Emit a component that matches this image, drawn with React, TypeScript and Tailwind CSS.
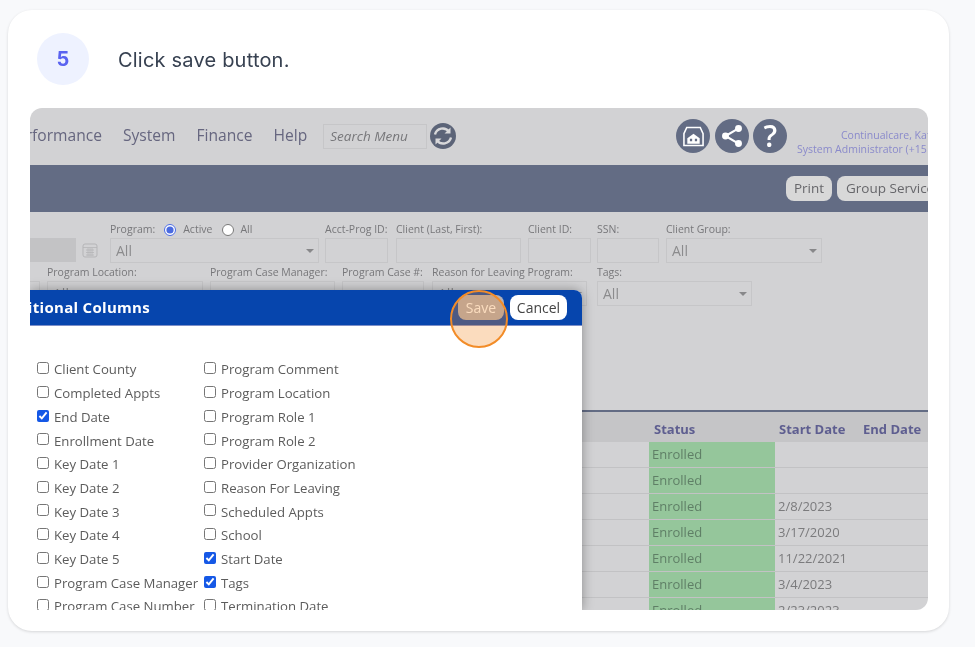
import React from 'react';

const leftColumn: [string, boolean][] = [
  ['Client County', false],
  ['Completed Appts', false],
  ['End Date', true],
  ['Enrollment Date', false],
  ['Key Date 1', false],
  ['Key Date 2', false],
  ['Key Date 3', false],
  ['Key Date 4', false],
  ['Key Date 5', false],
  ['Program Case Manager', false],
  ['Program Case Number', false],
];

const rightColumn: [string, boolean][] = [
  ['Program Comment', false],
  ['Program Location', false],
  ['Program Role 1', false],
  ['Program Role 2', false],
  ['Provider Organization', false],
  ['Reason For Leaving', false],
  ['Scheduled Appts', false],
  ['School', false],
  ['Start Date', true],
  ['Tags', true],
  ['Termination Date', false],
];

const startDates = ['', '', '2/8/2023', '3/17/2020', '11/22/2021', '3/4/2023', '2/23/2023'];

const Field = ({ label, className, select, value }: { label: string; className: string; select?: boolean; value?: string }) => (
  <div className={`shrink-0 ${className}`}>
    <div className="h-[17px] text-[10.5px] leading-[17px] text-[#77777a] whitespace-nowrap">{label}</div>
    <div className="h-[25px] border border-[#c6c6c8] flex items-center justify-between pl-[5px] pr-[4px] text-[14px] text-[#8b8b8d]">
      <span>{value}</span>
      {select && <span className="border-x-[4px] border-x-transparent border-t-[4px] border-t-[#88888a]" />}
    </div>
  </div>
);

const ColumnOption = ({ label, checked }: { label: string; checked: boolean }) => (
  <label className="flex items-center h-[23.7px] gap-[5px] whitespace-nowrap text-[13.2px] text-[#5c5c5c]">
    <input type="checkbox" checked={checked} readOnly className="w-[12px] h-[12px] m-0 accent-[#1558e6] -translate-y-[2px]" />
    {label}
  </label>
);

const CircleIcon = ({ children }: { children: React.ReactNode }) => (
  <span className="w-[34px] h-[34px] rounded-full bg-[#636c84] flex items-center justify-center text-white">{children}</span>
);

export default function App() {
  return (
    <div className="w-[975px] h-[647px] bg-[#f8f9fb] pt-[10px] pl-[8px] overflow-hidden font-['Inter',sans-serif] blur-[0.35px]">
      <div className="w-[941px] h-[621px] bg-white rounded-[24px] shadow-[0_1px_3px_rgba(0,0,0,0.14)] pt-[23px] pl-[22px]">
        {/* STEP HEADER */}
        <div className="flex items-center gap-[29px] pl-[7px]">
          <div className="w-[52px] h-[52px] rounded-full bg-[#eef2ff] flex items-center justify-center text-[20px] font-bold text-[#5a63f0]">5</div>
          <p className="text-[20px] text-[#374151] tracking-[0.2px] pt-[2px]">Click save button.</p>
        </div>

        {/* SCREENSHOT */}
        <div className="relative mt-[23px] w-[898px] h-[502px] rounded-tl-[12px] rounded-r-[12px] overflow-hidden bg-[#d2d2d4] font-['Open_Sans',sans-serif]">
          {/* top nav */}
          <div className="h-[57px] flex items-center pb-[1px] text-[15.6px] text-[#66667f] relative">
            <div className="w-[72px] overflow-hidden flex justify-end shrink-0"><span>Performance</span></div>
            <span className="ml-[21px]">System</span>
            <span className="ml-[21px]">Finance</span>
            <span className="ml-[21px]">Help</span>
            <div className="ml-[16px] w-[104px] h-[25px] border border-[#c6c6c8] flex items-center pl-[6px] text-[13.5px] italic text-[#77777a]">Search Menu</div>
            <svg viewBox="0 0 26 26" className="ml-[3px] w-[26px] h-[26px]">
              <circle cx="13" cy="13" r="13" fill="#5c6478" />
              <path d="M5 11.500a8 8 0 0 1 14-3M21 14.500a8 8 0 0 1-14 3" stroke="#d8d8da" strokeWidth="2.400" fill="none" />
              <path d="M20.500 4.500v6h-6zM5.500 21.500v-6h6z" fill="#d8d8da" />
            </svg>
            <div className="ml-[220px] flex gap-[4.5px]">
              <CircleIcon>
                <svg viewBox="0 0 24 24" className="w-[27px] h-[27px]" fill="none" stroke="currentColor" strokeWidth="1.400">
                  <path d="M3.500 9.500 6 4h12l2.500 5.500V20h-17z" />
                  <path d="M6.500 18.500v-5L12 9.500l5.500 4v5z" fill="currentColor" stroke="none" />
                  <path d="M8.800 14h2v2.200h-2zM13.200 14h2v2.200h-2z" fill="#636c84" stroke="none" />
                </svg>
              </CircleIcon>
              <CircleIcon>
                <svg viewBox="0 0 24 24" className="w-[26px] h-[26px]" fill="currentColor" stroke="currentColor" strokeWidth="2">
                  <circle cx="18" cy="5" r="2.200" />
                  <circle cx="6" cy="12" r="2.200" />
                  <circle cx="18" cy="19" r="2.200" />
                  <path d="M18 5 6 12l12 7" fill="none" />
                </svg>
              </CircleIcon>
              <CircleIcon><span className="text-[30px] font-semibold leading-none">?</span></CircleIcon>
            </div>
            <div className="absolute right-0 top-[20px] w-[131px] overflow-hidden text-[10.5px] leading-[14px] text-[#8a8acb] whitespace-nowrap">
              <div className="pl-[44px]">Continualcare, Kate</div>
              <div>System Administrator (+15</div>
            </div>
          </div>

          {/* slate toolbar */}
          <div className="h-[47px] bg-[#636c84] flex items-center pl-[756px] gap-[5px] text-[13.5px] text-[#66666a] whitespace-nowrap">
            <span className="h-[25px] w-[46px] shrink-0 rounded-[8px] bg-[#d8d8d8] flex items-center justify-center">Print</span>
            <span className="h-[25px] rounded-[8px] bg-[#d8d8d8] flex items-center pl-[9px] pr-[12px]">Group Services</span>
          </div>

          {/* filters */}
          <div className="h-[198px] pt-[9px]">
            <div className="flex h-[42px]">
              <div className="w-[46px] h-[24px] mt-[17px] bg-[#c3c3c5] shrink-0" />
              <svg viewBox="0 0 16 16" className="ml-[6px] mt-[21px] w-[16px] h-[16px] shrink-0" fill="none" stroke="#b5b5b7">
                <rect x="1" y="2" width="14" height="13" rx="2" />
                <path d="M1 5.500h14M4 8h8M4 10.500h8M4 13h8M6 6v8M8 6v8M10 6v8" strokeWidth="0.800" />
              </svg>
              <div className="ml-[12px] w-[209px] shrink-0">
                <div className="h-[17px] flex items-center text-[10.5px] text-[#77777a] whitespace-nowrap">
                  Program:
                  <input type="radio" checked readOnly className="ml-[9px] m-0 w-[12px] h-[12px] accent-[#4a6ae0]" />
                  <span className="ml-[7px]">Active</span>
                  <input type="radio" checked={false} readOnly className="ml-[10px] m-0 w-[12px] h-[12px]" />
                  <span className="ml-[6px]">All</span>
                </div>
                <div className="h-[25px] border border-[#c6c6c8] flex items-center justify-between pl-[5px] pr-[4px] text-[14px] text-[#8b8b8d]">
                  <span>All</span>
                  <span className="border-x-[4px] border-x-transparent border-t-[4px] border-t-[#88888a]" />
                </div>
              </div>
              <Field label="Acct-Prog ID:" className="ml-[6px] w-[63px]" />
              <Field label="Client (Last, First):" className="ml-[8px] w-[125px]" />
              <Field label="Client ID:" className="ml-[7px] w-[63px]" />
              <Field label="SSN:" className="ml-[6px] w-[62px]" />
              <Field label="Client Group:" className="ml-[7px] w-[156px]" select value="All" />
            </div>
            <div className="flex h-[42px] mt-[1px]">
              <div className="w-[10px] h-[24px] mt-[17px] border border-[#c6c6c8] border-l-0 shrink-0" />
              <Field label="Program Location:" className="ml-[7px] w-[156px]" select value="All" />
              <Field label="Program Case Manager:" className="ml-[7px] w-[125px]" />
              <Field label="Program Case #:" className="ml-[7px] w-[82px]" />
              <Field label="Reason for Leaving Program:" className="ml-[8px] w-[155px]" select value="All" />
              <Field label="Tags:" className="ml-[10px] w-[155px]" select value="All" />
            </div>
          </div>

          {/* table */}
          <div className="border-t-[2px] border-[#636c84]">
            <div className="h-[30px] bg-[#c5c5c7] flex items-center text-[13px] font-bold text-[#5e5e90] pt-[6px]">
              <span className="ml-[624px] w-[125px]">Status</span>
              <span className="w-[84px]">Start Date</span>
              <span>End Date</span>
            </div>
            {startDates.map((date, i) => (
              <div key={i} className="h-[26px] border-b border-[#c2c2c4] flex text-[13px] text-[#7b7b7d]">
                <div className="ml-[619px] w-[126px] bg-[#95c69b] pl-[3px] text-[#5f7f66] leading-[24px]">Enrolled</div>
                <div className="pl-[3px] leading-[24px]">{date}</div>
              </div>
            ))}
          </div>

          {/* modal */}
          <div className="absolute left-0 top-[182px] bottom-0 w-[552px] bg-white rounded-tr-[8px] shadow-[0_0_12px_rgba(0,0,0,0.35)] overflow-hidden">
            <div className="h-[36px] bg-[#0645ad] flex items-center border-b border-[#7d8fc8]">
              <div className="w-[120px] overflow-hidden flex justify-end text-[15px] tracking-[0.3px] font-bold text-white whitespace-nowrap shrink-0">Additional Columns</div>
              <span className="ml-[308px] w-[46px] h-[25px] rounded-[8px] bg-[#b3b1b7] flex items-center justify-center text-[14px] text-white">Save</span>
              <span className="ml-[6px] w-[57px] h-[25px] rounded-[8px] bg-white flex items-center justify-center text-[14px] text-[#444]">Cancel</span>
            </div>
            <div className="flex pt-[32.5px] pl-[7px]">
              <div className="w-[167px] shrink-0">
                {leftColumn.map(([label, checked]) => <ColumnOption key={label} label={label} checked={checked} />)}
              </div>
              <div>
                {rightColumn.map(([label, checked]) => <ColumnOption key={label} label={label} checked={checked} />)}
              </div>
            </div>
            {/* highlight ring */}
            <div className="absolute left-[420px] top-0 w-[58px] h-[58px] rounded-full border-2 border-[#f28c28] bg-[#f28c28]/30" />
          </div>
        </div>
      </div>
    </div>
  );
}
